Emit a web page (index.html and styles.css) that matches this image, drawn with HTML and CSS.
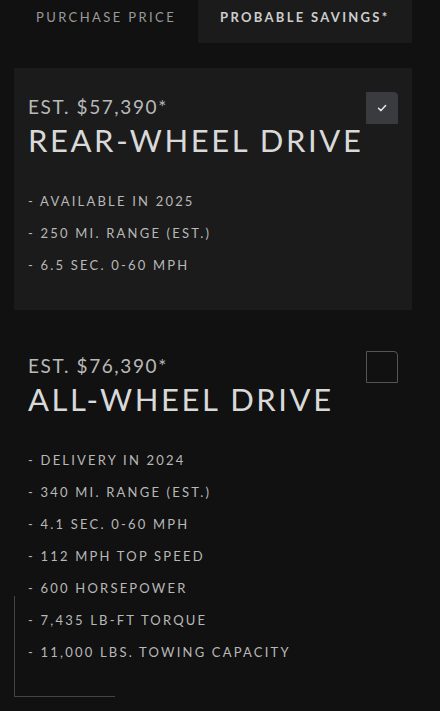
FILE: index.html
```html
<!DOCTYPE html>
<html>
<head>
<meta charset="utf-8">
<link rel="stylesheet" href="styles.css">
</head>
<body>
<div class="page">
  <nav class="tabs">
    <div class="tab">PURCHASE PRICE</div>
    <div class="tab active">PROBABLE SAVINGS*</div>
  </nav>
  <div class="cards">
    <section class="card selected">
      <div class="head">
        <div class="titles">
          <div class="price">EST. $57,390*</div>
          <h2 class="name">REAR-WHEEL DRIVE</h2>
        </div>
        <div class="check on">
          <svg viewBox="0 0 12 12" width="12" height="12"><path d="M2.5 6.3 L5 8.6 L9.6 3.6" fill="none" stroke="#e6e6e6" stroke-width="1.5" stroke-linecap="round" stroke-linejoin="round"/></svg>
        </div>
      </div>
      <ul class="feats">
        <li>- AVAILABLE IN 2025</li>
        <li>- 250 MI. RANGE (EST.)</li>
        <li>- 6.5 SEC. 0-60 MPH</li>
      </ul>
    </section>
    <section class="card corner">
      <div class="head">
        <div class="titles">
          <div class="price">EST. $76,390*</div>
          <h2 class="name">ALL-WHEEL DRIVE</h2>
        </div>
        <div class="check"></div>
      </div>
      <ul class="feats">
        <li>- DELIVERY IN 2024</li>
        <li>- 340 MI. RANGE (EST.)</li>
        <li>- 4.1 SEC. 0-60 MPH</li>
        <li>- 112 MPH TOP SPEED</li>
        <li>- 600 HORSEPOWER</li>
        <li>- 7,435 LB-FT TORQUE</li>
        <li>- 11,000 LBS. TOWING CAPACITY</li>
      </ul>
    </section>
  </div>
</div>
</body>
</html>
```

FILE: styles.css
```css
* { box-sizing: border-box; }
html, body {
  margin: 0;
  padding: 0;
  background: #111111;
  height: 100%;
}
body {
  font-family: "Lato", "DejaVu Sans", sans-serif;
  color: #cfcfcf;
  overflow: hidden;
}
.page {
  padding: 0 28px 0 14px;
}
.tabs {
  display: flex;
  height: 43px;
}
.tab {
  padding: 9px 22px 0;
  font-size: 13px;
  letter-spacing: 2.4px;
  color: #9a9a9a;
  font-weight: 400;
}
.tab.active {
  background: #1b1b1b;
  color: #cdcdcd;
  font-weight: 700;
  letter-spacing: 2.3px;
  flex: 1;
}
.cards {
  margin-top: 25px;
  display: flex;
  flex-direction: column;
  gap: 17px;
}
.card {
  position: relative;
  padding: 24px 14px 29px 14px;
}
.card.selected {
  background: #1b1b1b;
}
.card.corner::after {
  content: "";
  position: absolute;
  left: 0;
  bottom: 0;
  width: 100px;
  height: 100px;
  border-left: 1px solid #444;
  border-bottom: 1px solid #444;
}
.head {
  display: flex;
  justify-content: space-between;
  align-items: flex-start;
}
.price {
  font-size: 19px;
  letter-spacing: 1.6px;
  color: #b9b9b9;
  line-height: 24px;
  margin-top: 3px;
  margin-bottom: 3px;
}
.name {
  margin: 0;
  font-size: 31px;
  font-weight: 400;
  letter-spacing: 2.6px;
  color: #d9d9d9;
  line-height: 36px;
}
.check {
  width: 32px;
  height: 32px;
  border: 1.5px solid #555;
  border-top-right-radius: 4px;
  display: flex;
  align-items: center;
  justify-content: center;
}
.check.on {
  background: #3a3b3e;
  border-color: #3a3b3e;
}
.feats {
  list-style: none;
  margin: 27px 0 0;
  padding: 0;
}
.feats li {
  font-size: 13px;
  letter-spacing: 2.2px;
  color: #b8b8b8;
  line-height: 32px;
}
```
